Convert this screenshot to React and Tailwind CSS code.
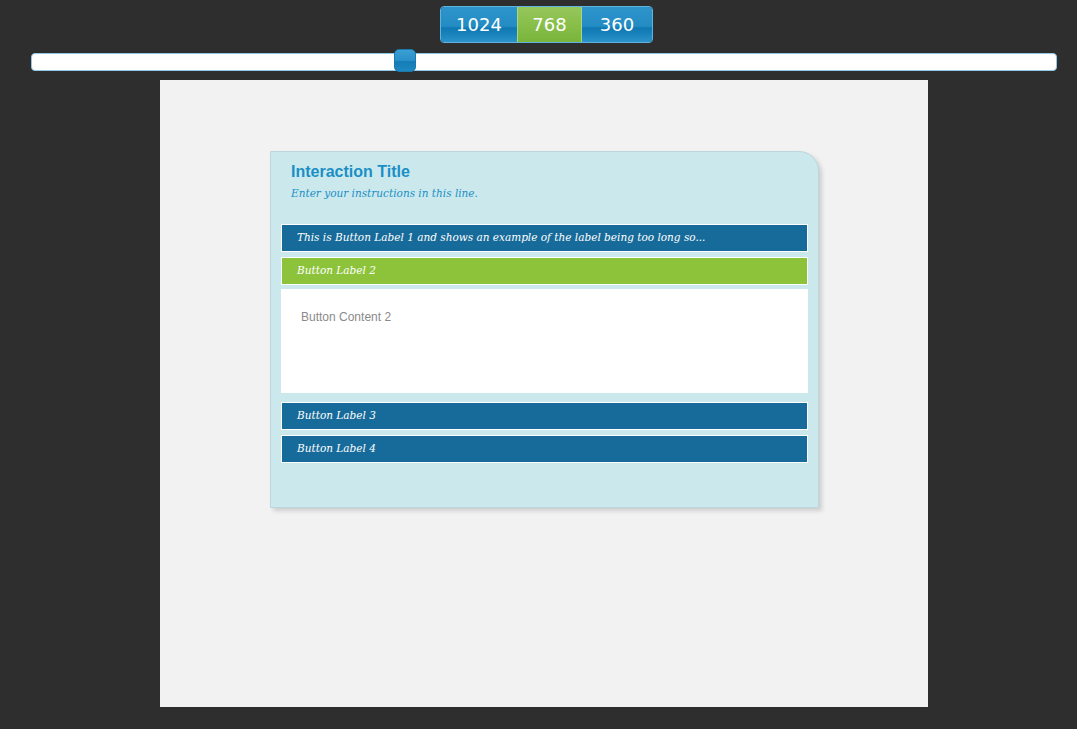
import React, { useState } from "react";

const SIZES = ["1024", "768", "360"];

const LABELS = [
  "This is Button Label 1 and shows an example of the label being too long so...",
  "Button Label 2",
  "Button Label 3",
  "Button Label 4",
];

const serif = { fontFamily: '"DejaVu Serif", "Liberation Serif", serif' };

const App = () => {
  const [size, setSize] = useState("768");
  const [open, setOpen] = useState(1);

  return (
    <div className="min-h-screen w-full bg-[#2e2e2e] flex flex-col items-center" style={{ fontFamily: '"Liberation Sans", Arial, sans-serif' }}>
      {/* Preview width switcher */}
      <div className="mt-[6px] ml-[16px] flex h-[37px] rounded-[4px] overflow-hidden border border-[#5fb3de]">
        {SIZES.map((s, i) => (
          <button
            key={s}
            onClick={() => setSize(s)}
            className={
              "h-full text-white text-[18px] flex items-center justify-center " +
              (i === 0 ? "w-[76px] " : i === 1 ? "w-[65px] border-x border-[#a9d67e] " : "w-[70px] ") +
              (s === size
                ? "bg-gradient-to-b from-[#95c65b] via-[#88bf4a] to-[#79b43a]"
                : "bg-[linear-gradient(to_bottom,#2e95cb_0%,#238cc3_55%,#0f78b2_60%,#1b84bd_80%,#2d93c9_100%)]")
            }
            style={{ fontFamily: '"DejaVu Sans", sans-serif' }}
          >
            {s}
          </button>
        ))}
      </div>

      {/* Width slider */}
      <div className="mt-[10px] w-full pl-[31px] pr-[20px]">
        <div className="relative h-[18px] rounded-[4px] bg-white border border-[#8fc9e6]">
          <div className="absolute left-[362px] top-[-5px] w-[22px] h-[23px] rounded-[5px] border border-[#1a78ad] bg-[linear-gradient(to_bottom,#3a9fd4_0%,#2a90c8_50%,#147cb6_55%,#1e88c1_100%)]" />
        </div>
      </div>

      {/* Preview canvas */}
      <div className="mt-[9px] ml-[11px] w-[768px] h-[627px] bg-[#f2f2f2] pt-[71px] pl-[110px]">
        <div className="w-[549px] h-[357px] bg-[#cbe9ed] border border-[#bcd7db] rounded-tr-[20px] shadow-[3px_3px_4px_rgba(0,0,0,0.15)] pt-[10px] px-[10px]">
          <div className="pl-[10px]">
            <h1 className="text-[16px] font-bold text-[#1a8fc6] leading-[20px]">Interaction Title</h1>
            <p className="mt-[4px] text-[10.5px] italic text-[#1a8fc6] leading-[14px]" style={serif}>
              Enter your instructions in this line.
            </p>
          </div>

          <div className="mt-[24px] flex flex-col">
            {LABELS.map((label, i) => (
              <React.Fragment key={i}>
                <button
                  onClick={() => setOpen(open === i ? -1 : i)}
                  className={
                    "h-[28px] w-full text-left pl-[15px] border border-white text-white text-[10.5px] italic " +
                    (i === 0 ? "" : open === i - 1 ? "mt-[9px] " : "mt-[5px] ") +
                    (open === i ? "bg-[#8dc33b]" : "bg-[#176b9a]")
                  }
                  style={serif}
                >
                  {label}
                </button>
                {open === i && (
                  <div className="mt-[4px] h-[104px] bg-white px-[20px] pt-[19px] text-[12px] text-[#8a8a8a]">
                    Button Content {i + 1}
                  </div>
                )}
              </React.Fragment>
            ))}
          </div>
        </div>
      </div>
    </div>
  );
};

export default App;
